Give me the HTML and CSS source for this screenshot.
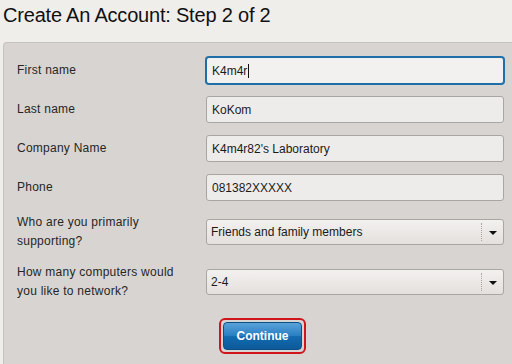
FILE: index.html
```html
<!DOCTYPE html>
<html lang="en">
<head>
    <meta charset="UTF-8">
    <meta name="viewport" content="width=device-width, initial-scale=1.0">
    <title>Create An Account</title>
    <link rel="stylesheet" href="styles.css">
</head>
<body>
    <h1 class="title">Create An Account: Step 2 of 2</h1>

    <form class="panel">
        <div class="row">
            <label class="label">First name</label>
            <div class="field focused">K4m4r<span class="caret"></span></div>
        </div>
        <div class="row">
            <label class="label">Last name</label>
            <div class="field">KoKom</div>
        </div>
        <div class="row">
            <label class="label">Company Name</label>
            <div class="field">K4m4r82's Laboratory</div>
        </div>
        <div class="row">
            <label class="label">Phone</label>
            <div class="field">081382XXXXX</div>
        </div>
        <div class="row">
            <label class="label">Who are you primarily<br>supporting?</label>
            <div class="select">
                <span class="select-text">Friends and family members</span>
                <span class="select-arrow"></span>
            </div>
        </div>
        <div class="row">
            <label class="label">How many computers would<br>you like to network?</label>
            <div class="select">
                <span class="select-text">2-4</span>
                <span class="select-arrow"></span>
            </div>
        </div>

        <div class="actions">
            <span class="ring">
                <button type="button" class="continue">Continue</button>
            </span>
        </div>
    </form>
</body>
</html>
```

FILE: styles.css
```css
html, body {
    margin: 0;
    height: 100%;
    overflow: hidden;
}

body {
    display: flex;
    flex-direction: column;
    box-sizing: border-box;
    background-color: #f0eeeb;
    padding-left: 3px;
    font-family: "Liberation Sans", Arial, sans-serif;
    color: #222;
}

.title {
    margin: 0;
    padding-top: 3px;
    font-size: 20px;
    font-weight: normal;
    line-height: 24px;
    color: #111;
    letter-spacing: -0.2px;
}

.panel {
    flex: 1;
    margin-top: 15px;
    box-sizing: border-box;
    padding: 14px 0 0 13px;
    background-color: #d8d4d1;
    border-top: 1px solid #c6c2be;
    border-left: 1px solid #c6c2be;
    border-top-left-radius: 4px;
}

.row {
    display: flex;
    align-items: center;
    margin-bottom: 12px;
}

.label {
    width: 189px;
    flex-shrink: 0;
    font-size: 12px;
    line-height: 19px;
    letter-spacing: 0.25px;
    color: #262626;
}

.field {
    width: 298px;
    height: 27px;
    box-sizing: border-box;
    padding: 0 5px;
    display: flex;
    align-items: center;
    background-color: #eeecea;
    border: 1px solid #a8a5a2;
    border-radius: 3px;
    font-size: 12px;
    color: #1a1a1a;
}

.field.focused {
    border-color: #1f6ea8;
    box-shadow: 0 0 0 1px #1f6ea8;
    background-color: #f2f1ef;
}

.caret {
    display: inline-block;
    width: 1px;
    height: 14px;
    margin-left: 1px;
    background-color: #111;
}

.select {
    width: 298px;
    height: 26px;
    box-sizing: border-box;
    display: flex;
    align-items: center;
    background: linear-gradient(#f3f1ef, #e3e0dd);
    border: 1px solid #aaa6a2;
    border-radius: 3px;
    font-size: 12px;
    color: #1a1a1a;
}

.select-text {
    flex: 1;
    padding-left: 4px;
}

.select-arrow {
    width: 21px;
    height: 18px;
    border-left: 1px dotted #a9a5a1;
    position: relative;
}

.select-arrow::after {
    content: "";
    position: absolute;
    left: 7px;
    top: 8px;
    border-left: 4px solid transparent;
    border-right: 4px solid transparent;
    border-top: 4px solid #111;
}

.actions {
    display: flex;
    margin-left: 202px;
    margin-top: 17px;
}

.ring {
    display: inline-block;
    padding: 2px;
    border: 2px solid #d0161c;
    border-radius: 6px;
}

.continue {
    display: block;
    width: 79px;
    height: 28px;
    padding: 0;
    border: 1px solid #0c4f86;
    border-radius: 4px;
    background: linear-gradient(#5aa2d8, #2a80c4 48%, #136bb0 52%, #0c5a9a);
    color: white;
    font-family: "Liberation Sans", Arial, sans-serif;
    font-size: 12px;
    font-weight: bold;
    cursor: pointer;
}
```
